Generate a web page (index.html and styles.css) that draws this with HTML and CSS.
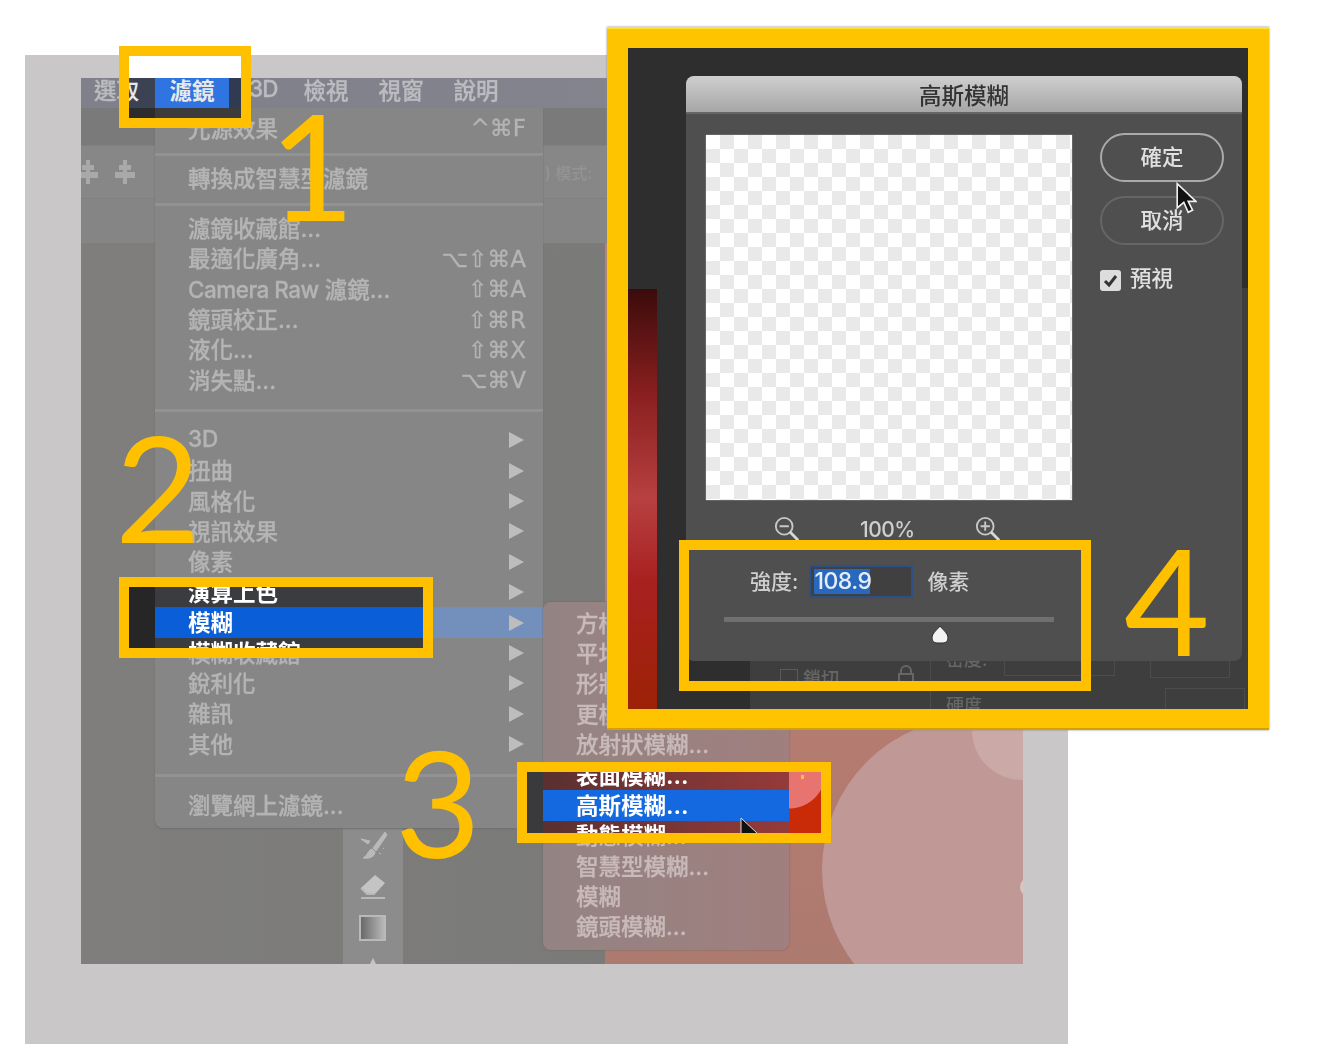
FILE: index.html
```html
<!DOCTYPE html>
<html lang="zh-Hant">
<head>
    <meta charset="UTF-8">
    <title>高斯模糊</title>
    <link rel="stylesheet" href="styles.css">
</head>
<body>
    <div class="sheet">
        <div class="shot">
            <div class="menubar">
                <span>選取</span><span>濾鏡</span><span class="bar-3d">3D</span><span>檢視</span><span>視窗</span><span>說明</span>
            </div>
            <div class="tool-row tool-row-a"></div>
            <div class="tool-row tool-row-b">
                <svg class="align-icon" viewBox="0 0 20 26"><path d="M8 1h4v5h4v5h-4v2h8v6h-8v6H8v-6H0v-6h8v-2H4V6h4z" fill="#a9a9a9"/></svg>
                <svg class="align-icon" viewBox="0 0 20 26"><path d="M8 1h4v5h4v5h-4v2h8v6h-8v6H8v-6H0v-6h8v-2H4V6h4z" fill="#a9a9a9"/></svg>
                <span class="mode-label">) 模式:</span>
            </div>
            <div class="tool-row tool-row-c"></div>
            <div class="workspace">
                <div class="dock">
                    <div class="tool-strip">
                        <svg viewBox="0 0 30 30"><path d="M27 1 15 17l3 3L29 4zM14 18c-4 1-4 6-9 9 6 1 12-1 12-6zM3 8l9 2-2 3zM21 22l2 1M25 17l1 1" fill="#b9b9b9" stroke="#b9b9b9"/></svg>
                        <svg viewBox="0 0 30 30"><path d="M17 3 27 11 17 22H9L3 16z" fill="#c4c4c4"/><path d="M3 16l6 6h8M3 26h24" fill="none" stroke="#b9b9b9" stroke-width="2"/></svg>
                        <svg viewBox="0 0 30 30"><defs><linearGradient id="grad"><stop offset="0" stop-color="#666"/><stop offset="1" stop-color="#bbb"/></linearGradient></defs><rect x="2" y="3" width="25" height="24" fill="url(#grad)" stroke="#b9b9b9" stroke-width="2"/></svg>
                        <svg viewBox="0 0 30 30"><path d="M15 4l7 14H8z" fill="#c4c4c4"/></svg>
                    </div>
                </div>
                <div class="canvas">
                    <i class="blob blob-large"></i>
                    <i class="blob blob-small"></i>
                    <i class="blob blob-edge"></i>
                </div>
            </div>

            <div class="menu">
                <div class="menu-group group-a">
                    <div class="item">光源效果<kbd>^⌘F</kbd></div>
                </div>
                <div class="menu-group group-b">
                    <div class="item">轉換成智慧型濾鏡</div>
                </div>
                <div class="menu-group group-c">
                    <div class="item">濾鏡收藏館...</div>
                    <div class="item">最適化廣角...<kbd>⌥⇧⌘A</kbd></div>
                    <div class="item"><span><span class="latin">Camera Raw</span> 濾鏡...</span><kbd>⇧⌘A</kbd></div>
                    <div class="item">鏡頭校正...<kbd>⇧⌘R</kbd></div>
                    <div class="item">液化...<kbd>⇧⌘X</kbd></div>
                    <div class="item">消失點...<kbd>⌥⌘V</kbd></div>
                </div>
                <div class="menu-group group-d">
                    <div class="item sub">3D</div>
                    <div class="item sub">扭曲</div>
                    <div class="item sub">風格化</div>
                    <div class="item sub">視訊效果</div>
                    <div class="item sub">像素</div>
                    <div class="item sub">演算上色</div>
                    <div class="item sub item-open">模糊</div>
                    <div class="item sub">模糊收藏館</div>
                    <div class="item sub">銳利化</div>
                    <div class="item sub">雜訊</div>
                    <div class="item sub">其他</div>
                </div>
                <div class="menu-group group-e">
                    <div class="item">瀏覽網上濾鏡...</div>
                </div>
            </div>

            <div class="submenu">
                <div class="item">方框模糊...</div>
                <div class="item">平均</div>
                <div class="item">形狀模糊...</div>
                <div class="item">更模糊</div>
                <div class="item">放射狀模糊...</div>
                <div class="item">表面模糊...</div>
                <div class="item">高斯模糊...</div>
                <div class="item">動態模糊...</div>
                <div class="item">智慧型模糊...</div>
                <div class="item">模糊</div>
                <div class="item">鏡頭模糊...</div>
            </div>
        </div>
    </div>

    <!-- step 1 -->
    <div class="spot spot-one">
        <div class="spot-inner">
            <div class="spot-white"></div>
            <div class="spot-bar">
                <span class="bar-select">選取</span>
                <span class="bar-active">濾鏡</span>
            </div>
            <div class="spot-under"></div>
        </div>
    </div>
    <div class="step step-one">1</div>

    <!-- step 2 -->
    <div class="spot spot-two">
        <div class="spot-inner spot-cols">
            <div class="spot-side"></div>
            <div class="spot-list">
                <div class="item">演算上色</div>
                <div class="item item-blue">模糊</div>
                <div class="item">模糊收藏館</div>
            </div>
        </div>
    </div>
    <div class="step step-two">2</div>

    <!-- step 3 -->
    <div class="spot spot-three">
        <div class="spot-inner spot-cols">
            <div class="spot-side"></div>
            <div class="spot-list">
                <div class="item">表面模糊...</div>
                <div class="item item-blue">高斯模糊...</div>
                <div class="item">動態模糊...</div>
            </div>
            <div class="spot-red"><i class="red-dot"></i></div>
            <svg class="cursor cursor-menu" viewBox="0 0 20 28"><path d="M2 1v22l6-5 4 9 4-2-4-8h7z" fill="#111" stroke="#ddd"/></svg>
        </div>
    </div>
    <div class="step step-three">3</div>

    <!-- step 4 -->
    <div class="bigbox">
        <div class="bigbox-inner">
            <div class="back-panel">
                <span class="back-check"></span>
                <span class="back-text back-lock-label">鎖切</span>
                <svg class="back-lock" viewBox="0 0 18 20"><path d="M4 9V6a5 5 0 0 1 10 0v3M2 9h14v10H2z" fill="none" stroke="#666" stroke-width="2"/></svg>
                <i class="back-divider"></i>
                <span class="back-text back-density">密度:</span>
                <span class="back-text back-hard">硬度</span>
                <i class="back-outline back-outline-a"></i>
                <i class="back-outline back-outline-b"></i>
                <i class="back-outline back-outline-c"></i>
            </div>
            <div class="red-strip"></div>
            <div class="dialog">
                <div class="dialog-title">高斯模糊</div>
                <div class="dialog-body">
                    <div class="dialog-main">
                        <div class="preview"></div>
                        <div class="zoom-row">
                            <svg class="zoom-icon" viewBox="0 0 28 28"><circle cx="11" cy="11" r="9" fill="none" stroke="#c8c8c8" stroke-width="2"/><path d="M6 11h10" stroke="#c8c8c8" stroke-width="2"/><path d="M17 17l9 9" stroke="#d8d8d8" stroke-width="3"/></svg>
                            <span class="zoom-value">100%</span>
                            <svg class="zoom-icon" viewBox="0 0 28 28"><circle cx="11" cy="11" r="9" fill="none" stroke="#c8c8c8" stroke-width="2"/><path d="M6 11h10M11 6v10" stroke="#c8c8c8" stroke-width="2"/><path d="M17 17l9 9" stroke="#d8d8d8" stroke-width="3"/></svg>
                        </div>
                        <div class="radius-row">
                            <span>強度:</span>
                            <span class="radius-input"><span class="radius-value">108.9</span></span>
                            <span class="radius-unit">像素</span>
                        </div>
                        <div class="slider">
                            <svg class="slider-thumb" viewBox="0 0 20 20"><path d="M10 1c2 3 8 7 8 12 0 3-2 5-5 5H7c-3 0-5-2-5-5 0-5 6-9 8-12z" fill="#f2f2f2" stroke="#2c2c2c"/></svg>
                        </div>
                    </div>
                    <div class="dialog-side">
                        <div class="btn btn-ok"><span>確定</span></div>
                        <div class="btn btn-cancel"><span>取消</span></div>
                        <div class="preview-check">
                            <svg class="checkbox" viewBox="0 0 21 21"><rect width="21" height="21" rx="3" fill="#ddd"/><path d="M5 11l4 4 7-9" fill="none" stroke="#333" stroke-width="3"/></svg>
                            <span>預視</span>
                        </div>
                        <svg class="cursor cursor-dialog" viewBox="0 0 20 28"><path d="M2 1v22l6-5 4 9 4-2-4-8h7z" fill="#111" stroke="#eee" stroke-width="1.5"/></svg>
                    </div>
                </div>
            </div>
            <div class="frame-four"></div>
        </div>
    </div>
    <div class="step step-four">4</div>
</body>
</html>
```

FILE: styles.css
```css
* {
    box-sizing: border-box;
}
body {
    position: relative;
    width: 1323px;
    height: 1044px;
    margin: 0;
    overflow: hidden;
    background-color: #fff;
    font-family: Inter, "Noto Sans CJK TC", sans-serif;
    font-size: 22.5px;
    font-weight: 500;
}

/* grey sheet and the dimmed photoshop shot */
.sheet {
    width: 1043px;
    height: 989px;
    margin: 55px 0 0 25px;
    padding: 23px 0 0 56px;
    background-color: #c9c7c8;
}
.shot {
    position: relative;
    display: flex;
    flex-direction: column;
    width: 942px;
    height: 886px;
    overflow: hidden;
    background-color: #7e7d7b;
    filter: blur(0.6px);
}
.menubar {
    display: flex;
    align-items: center;
    gap: 30px;
    flex: none;
    height: 30px;
    padding: 0 0 9px 13px;
    background: linear-gradient(to right, #7f8089, #85868f);
    color: #bcbcc0;
    -webkit-text-stroke: 0.3px;
}
.bar-3d {
    margin-left: 5px;
    margin-right: -4px;
    letter-spacing: -1px;
}
.tool-row {
    flex: none;
    display: flex;
    align-items: center;
}
.tool-row-a {
    height: 37px;
    background-color: #7a7a7a;
}
.tool-row-b {
    height: 53px;
    gap: 17px;
    background-color: #878787;
    border-top: 1px solid #808080;
}
.tool-row-c {
    height: 45px;
    background-color: #858585;
    border-top: 1px solid #808080;
}
.align-icon {
    width: 20px;
    height: 26px;
}
.align-icon:first-child {
    margin-left: -3px;
}
.mode-label {
    margin-left: 393px;
    font-size: 16px;
    color: #949494;
}
.workspace {
    flex: 1;
    display: flex;
}
.dock {
    display: flex;
    align-items: flex-end;
    flex: none;
    width: 524px;
    padding-left: 262px;
    background: linear-gradient(to right, #7f7e7c, #7a7a78);
}
.tool-strip {
    display: flex;
    flex-direction: column;
    align-items: center;
    gap: 11px;
    flex: none;
    width: 60px;
    height: 136px;
    padding-top: 3px;
    overflow: hidden;
    background-color: #8c8c8c;
}
.tool-strip svg {
    flex: none;
    width: 30px;
    height: 30px;
}
.canvas {
    position: relative;
    flex: 1;
    overflow: hidden;
    background: linear-gradient(to bottom, #c47f70, #ad7a70);
}
.blob {
    position: absolute;
    border-radius: 50%;
}
.blob-large {
    left: 217px;
    top: 474px;
    width: 306px;
    height: 306px;
    background-color: #c09896;
}
.blob-small {
    left: 367px;
    top: 437px;
    width: 100px;
    height: 100px;
    background-color: #cba9a6;
}
.blob-edge {
    left: 415px;
    top: 634px;
    width: 20px;
    height: 20px;
    background-color: #d9c6c4;
}

/* menus */
.item {
    display: flex;
    justify-content: space-between;
    align-items: center;
    height: 30.4px;
    padding: 0 17px 3px 33px;
    white-space: nowrap;
}
.latin {
    letter-spacing: -0.5px;
}
.item kbd {
    margin-top: 3px;
    font-family: "DejaVu Sans", Inter, sans-serif;
    font-size: 23px;
}
.sub::after {
    content: "";
    margin: 3px 2px 0 0;
    border-left: 15px solid #bdbdbd;
    border-top: 8.5px solid transparent;
    border-bottom: 8.5px solid transparent;
}
.menu {
    position: absolute;
    left: 74px;
    top: 30px;
    width: 388px;
    height: 720px;
    background-color: #878686;
    color: #b5b4b4;
    border-radius: 0 0 8px 8px;
    box-shadow: 0 1px 2px #6f6f6f;
    -webkit-text-stroke: 0.3px;
}
.menu-group {
    border-bottom: 3px solid #939292;
}
.group-a {
    padding: 4.8px 0 10.2px;
}
.group-b {
    padding: 7px 0 9.6px;
}
.group-c {
    padding: 6.8px 0 13.3px;
}
.group-d {
    padding: 13.3px 0 14.3px;
}
.group-e {
    padding-top: 13.3px;
    border-bottom: 0;
}
.item-open {
    background-color: #7390bd;
}
.submenu {
    position: absolute;
    left: 462px;
    top: 524px;
    width: 246px;
    height: 348px;
    padding-top: 5.8px;
    background: linear-gradient(to right, #938483, #a07f7e);
    color: #c9baba;
    border-radius: 8px;
    box-shadow: 0 0 2px #6f6060;
    -webkit-text-stroke: 0.3px;
}

/* yellow call-outs */
.spot {
    position: absolute;
    border: 10px solid #ffc000;
}
.spot-inner {
    position: relative;
    width: 100%;
    height: 100%;
    overflow: hidden;
}
.spot-one {
    left: 119px;
    top: 46px;
    width: 132px;
    height: 82px;
}
.spot-white {
    height: 22px;
    background-color: #fff;
}
.spot-bar {
    display: flex;
    height: 30px;
    background-color: #303b52;
    color: #e8e8e8;
}
.bar-select {
    display: flex;
    align-items: center;
    justify-content: flex-end;
    width: 26px;
    padding: 0 16px 9px 0;
    white-space: nowrap;
    background-color: #3a4254;
}
.bar-active {
    display: flex;
    align-items: center;
    justify-content: center;
    width: 74px;
    padding-bottom: 9px;
    background-color: #2f74e0;
    font-weight: 700;
}
.spot-under {
    height: 10px;
    background: linear-gradient(to right, #2c2c2c 26px, #3c3c3c 26px);
}
.spot-cols {
    display: flex;
    filter: blur(0.4px);
}
.spot-side {
    flex: none;
    background-color: #262626;
}
.spot-list {
    flex: 1;
    color: #fff;
    font-weight: 700;
}
.spot-two {
    left: 119px;
    top: 577px;
    width: 314px;
    height: 81px;
}
.spot-two .spot-side {
    width: 26px;
}
.spot-two .spot-list {
    margin-top: -10.2px;
    background-color: #3b3c3f;
}
.item-blue {
    background-color: #0a5fd8;
}
.spot-three {
    left: 517px;
    top: 762px;
    width: 314px;
    height: 81px;
}
.spot-three .spot-side {
    width: 16px;
    background-color: #3a3a3c;
}
.spot-three .spot-list {
    flex: none;
    width: 246px;
    margin-top: -12.2px;
    background: linear-gradient(to right, #5a3030, #963a3a);
}
.spot-three .item-blue {
    background-color: #1468e0;
}
.spot-red {
    position: relative;
    flex: 1;
    background: radial-gradient(circle at 0 0, #e87470 36px, #c92a08 37px);
}
.red-dot {
    position: absolute;
    left: 12px;
    top: 3px;
    width: 3px;
    height: 4px;
    background-color: #ffc040;
}
.cursor {
    position: absolute;
}
.cursor-menu {
    left: 212px;
    top: 45px;
    width: 20px;
    height: 28px;
}
.step {
    position: absolute;
    font-family: Lato, sans-serif;
    font-size: 148px;
    font-weight: 400;
    line-height: 1;
    color: #ffc000;
}
.step-one {
    left: 269px;
    top: 90px;
}
.step-two {
    left: 115px;
    top: 412px;
}
.step-three {
    left: 395px;
    top: 727px;
}
.step-four {
    left: 1124px;
    top: 525px;
}

/* step 4: the gaussian blur dialog */
.bigbox {
    position: absolute;
    left: 607px;
    top: 27px;
    width: 662px;
    height: 703px;
    padding: 21px;
    background-color: #ffc400;
    box-shadow: inset 0 2px 0 #ffe22e, inset 0 -2px 0 #d6a100, 0 0 2px #8a8a8a;
}
.bigbox-inner {
    position: relative;
    height: 100%;
    padding: 28px 6px 0 58px;
    overflow: hidden;
    background-color: #2e2e2e;
}
.back-panel {
    position: absolute;
    left: 122px;
    right: 0;
    top: 240px;
    bottom: 0;
    background-color: #3e3e3e;
    color: #666;
    filter: blur(0.6px);
}
.back-check {
    position: absolute;
    left: 30px;
    top: 381px;
    width: 18px;
    height: 18px;
    border: 1px solid #5a5a5a;
}
.back-text {
    position: absolute;
    font-size: 18px;
}
.back-lock-label {
    left: 53px;
    top: 376px;
}
.back-lock {
    position: absolute;
    left: 147px;
    top: 377px;
    width: 18px;
    height: 20px;
}
.back-divider {
    position: absolute;
    left: 180px;
    top: 370px;
    bottom: 0;
    width: 1px;
    background-color: #4c4c4c;
}
.back-density {
    left: 196px;
    top: 357px;
}
.back-hard {
    left: 196px;
    top: 403px;
}
.back-outline {
    position: absolute;
    border: 1px solid #4c4c4c;
}
.back-outline-a {
    left: 254px;
    top: 360px;
    width: 111px;
    height: 28px;
}
.back-outline-b {
    left: 400px;
    top: 360px;
    width: 80px;
    height: 30px;
}
.back-outline-c {
    left: 415px;
    top: 400px;
    width: 80px;
    height: 40px;
}
.red-strip {
    position: absolute;
    left: 0;
    top: 241px;
    bottom: 0;
    width: 29px;
    background: linear-gradient(to bottom, #3b0b0b, #8a1f1f 25%, #b84040 50%, #a82020 70%, #9c2205);
}
.dialog {
    position: relative;
    width: 556px;
    height: 585px;
    background-color: #4f4f4f;
    border-radius: 8px;
    overflow: hidden;
    filter: blur(0.4px);
}
.dialog-title {
    height: 38px;
    line-height: 40px;
    text-align: center;
    font-size: 22.5px;
    color: #333;
    background: linear-gradient(to bottom, #cfcfcf, #a6a6a6);
    border-bottom: 2px solid #666;
}
.dialog-body {
    display: flex;
    gap: 28px;
    padding: 21px 18px 0 20px;
}
.dialog-main {
    width: 366px;
}
.preview {
    height: 365px;
    background: repeating-conic-gradient(#e9e9e9 0 25%, #fff 0 50%) 0 0 / 28px 28px;
    box-shadow: 0 0 1px #ddd;
}
.zoom-row {
    display: flex;
    align-items: center;
    gap: 60px;
    height: 26px;
    margin-top: 16px;
    padding-left: 68px;
    color: #cfcfcf;
}
.zoom-icon {
    flex: none;
    width: 26px;
    height: 26px;
}
.zoom-value {
    font-size: 21px;
    letter-spacing: -0.5px;
}
.radius-row {
    display: flex;
    align-items: center;
    height: 33px;
    margin-top: 23px;
    padding-left: 44px;
    font-size: 21px;
    color: #cfcfcf;
}
.radius-row > span:first-child,
.radius-unit {
    padding-bottom: 4px;
}
.radius-input {
    display: flex;
    align-items: center;
    width: 104px;
    height: 33px;
    margin-left: 11px;
    padding-left: 3px;
    background-color: #404040;
    border: 2px solid #2c4f86;
}
.radius-value {
    width: 56px;
    height: 25px;
    line-height: 25px;
    font-size: 23px;
    color: #e4edf8;
    letter-spacing: -0.5px;
    background-color: #2868be;
}
.radius-unit {
    margin-left: 14px;
}
.slider {
    position: relative;
    width: 330px;
    height: 5px;
    margin: 19px 0 0 18px;
    background-color: #707070;
}
.slider-thumb {
    position: absolute;
    left: 206px;
    top: 8px;
    width: 20px;
    height: 20px;
}
.dialog-side {
    position: relative;
    width: 124px;
    font-size: 21.5px;
    color: #e0e0e0;
}
.btn {
    display: flex;
    align-items: center;
    justify-content: center;
    height: 49px;
    margin-top: -2px;
    margin-bottom: 16px;
    padding-bottom: 4px;
    border: 2px solid #aaa;
    border-radius: 25px;
}
.btn-cancel {
    border-color: #666;
}
.preview-check {
    display: flex;
    align-items: center;
    gap: 9px;
    margin-top: 25px;
    line-height: 21px;
}
.preview-check span {
    margin-top: -4px;
}
.checkbox {
    width: 21px;
    height: 21px;
}
.cursor-dialog {
    left: 75px;
    top: 47px;
    width: 22px;
    height: 32px;
}
.frame-four {
    position: absolute;
    left: 51px;
    top: 492px;
    width: 412px;
    height: 151px;
    border: 10px solid #ffc000;
}
```
